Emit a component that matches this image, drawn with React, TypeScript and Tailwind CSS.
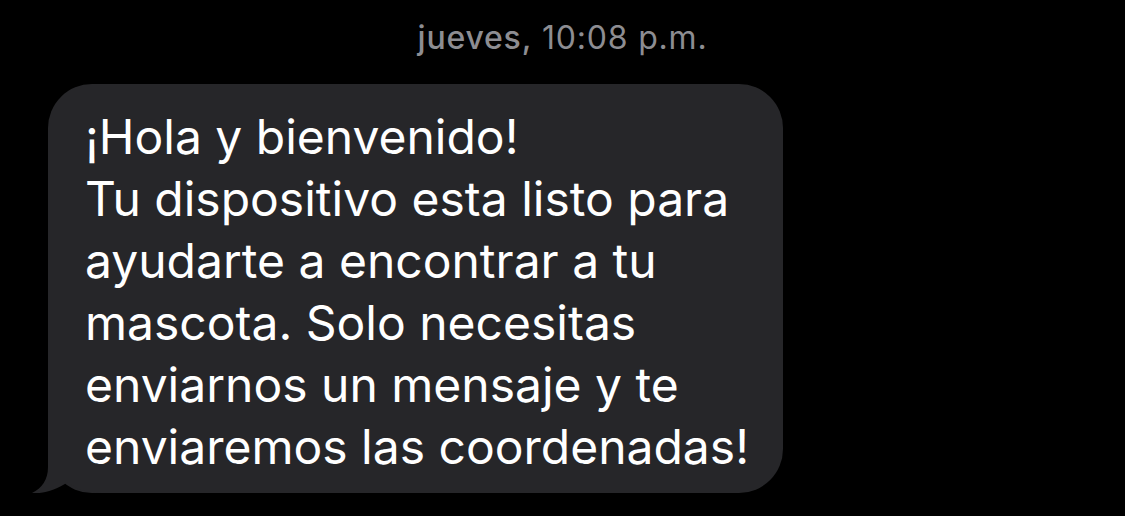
export default function App() {
  const lines = [
    "¡Hola y bienvenido!",
    "Tu dispositivo esta listo para",
    "ayudarte a encontrar a tu",
    "mascota. Solo necesitas",
    "enviarnos un mensaje y te",
    "enviaremos las coordenadas!",
  ];

  return (
    <div className="w-full h-[516px] bg-black overflow-hidden font-['Inter',sans-serif]">
      <div className="pt-[16px] text-center text-[32px] leading-[44px] tracking-[0.8px] text-[#8d8d92]">
        <span className="font-medium">jueves,</span> 10:08 p.m.
      </div>

      <div className="relative ml-[48px] mt-[24px] w-[735px] h-[409px] rounded-[44px] bg-[#262629] pl-[37px] pt-[22px]">
        <svg
          className="absolute left-[-16px] bottom-0"
          width="70"
          height="50"
          viewBox="0 0 70 50"
        >
          <path
            d="M16 0 L16 24 C16 37 10 45 0 50 C12 51 24 47 36 39 C44 46 54 50 70 50 L70 0 Z"
            fill="#262629"
          />
        </svg>

        <div className="relative text-white text-[48px] leading-[62px]">
          {lines.map((l) => (
            <div key={l} className="whitespace-nowrap">
              {l}
            </div>
          ))}
        </div>
      </div>
    </div>
  );
}
